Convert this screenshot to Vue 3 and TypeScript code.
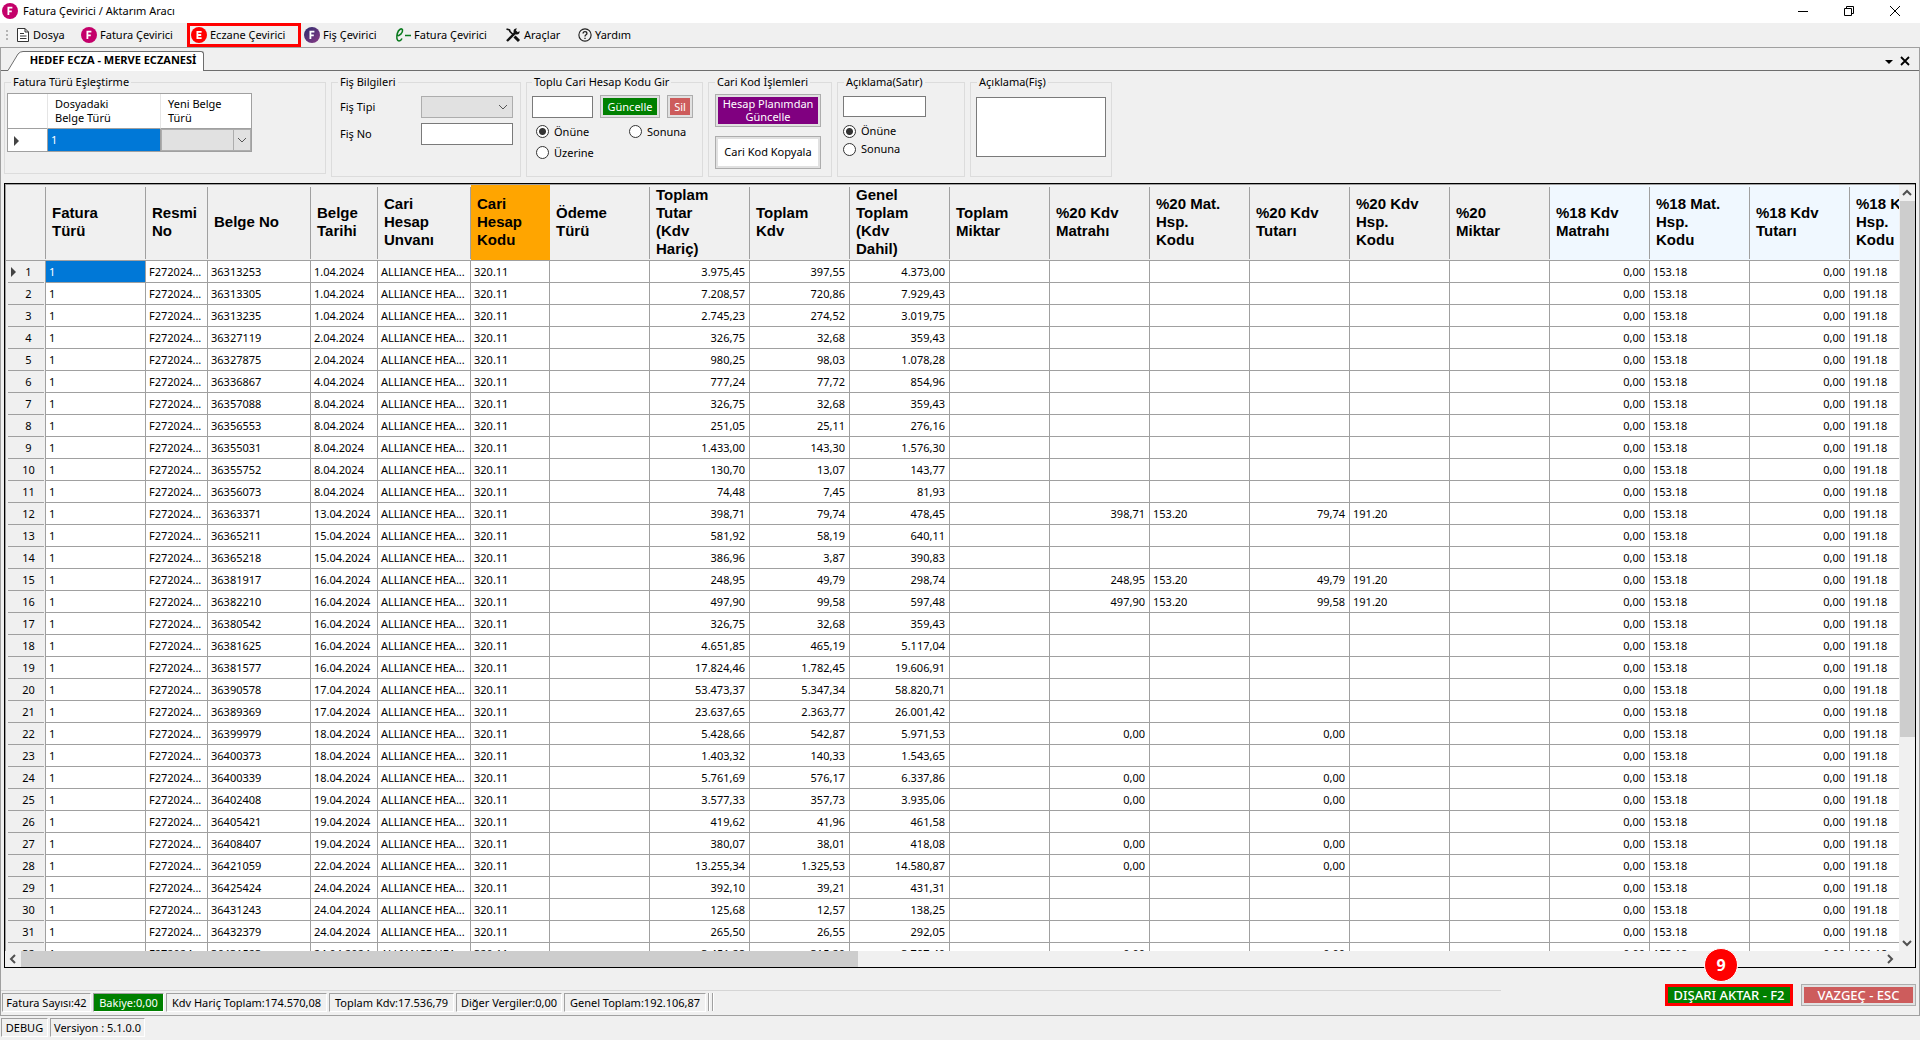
<script setup lang="ts">
import { ref } from 'vue'

interface Column {
  label: string[]
  width: number
  align?: 'right'
  tone?: 'orange' | 'blue'
}

interface Row {
  no: number
  cells: string[]
}

const columns: Column[] = [
  { label: ['Fatura', 'Türü'], width: 100 },
  { label: ['Resmi', 'No'], width: 62 },
  { label: ['Belge No'], width: 103 },
  { label: ['Belge', 'Tarihi'], width: 67 },
  { label: ['Cari', 'Hesap', 'Unvanı'], width: 93 },
  { label: ['Cari', 'Hesap', 'Kodu'], width: 79, tone: 'orange' },
  { label: ['Ödeme', 'Türü'], width: 100 },
  { label: ['Toplam', 'Tutar', '(Kdv', 'Hariç)'], width: 100, align: 'right' },
  { label: ['Toplam', 'Kdv'], width: 100, align: 'right' },
  { label: ['Genel', 'Toplam', '(Kdv', 'Dahil)'], width: 100, align: 'right' },
  { label: ['Toplam', 'Miktar'], width: 100, align: 'right' },
  { label: ['%20 Kdv', 'Matrahı'], width: 100, align: 'right' },
  { label: ['%20 Mat.', 'Hsp.', 'Kodu'], width: 100 },
  { label: ['%20 Kdv', 'Tutarı'], width: 100, align: 'right' },
  { label: ['%20 Kdv', 'Hsp.', 'Kodu'], width: 100 },
  { label: ['%20', 'Miktar'], width: 100, align: 'right' },
  { label: ['%18 Kdv', 'Matrahı'], width: 100, align: 'right', tone: 'blue' },
  { label: ['%18 Mat.', 'Hsp.', 'Kodu'], width: 100, tone: 'blue' },
  { label: ['%18 Kdv', 'Tutarı'], width: 100, align: 'right', tone: 'blue' },
  { label: ['%18 Kdv', 'Hsp.', 'Kodu'], width: 100, tone: 'blue' },
]

// belge no | tarih | kdv hariç | kdv | kdv dahil | %20 matrah | %20 kdv
const source = `36313253|1.04.2024|3.975,45|397,55|4.373,00
36313305|1.04.2024|7.208,57|720,86|7.929,43
36313235|1.04.2024|2.745,23|274,52|3.019,75
36327119|2.04.2024|326,75|32,68|359,43
36327875|2.04.2024|980,25|98,03|1.078,28
36336867|4.04.2024|777,24|77,72|854,96
36357088|8.04.2024|326,75|32,68|359,43
36356553|8.04.2024|251,05|25,11|276,16
36355031|8.04.2024|1.433,00|143,30|1.576,30
36355752|8.04.2024|130,70|13,07|143,77
36356073|8.04.2024|74,48|7,45|81,93
36363371|13.04.2024|398,71|79,74|478,45|398,71|79,74
36365211|15.04.2024|581,92|58,19|640,11
36365218|15.04.2024|386,96|3,87|390,83
36381917|16.04.2024|248,95|49,79|298,74|248,95|49,79
36382210|16.04.2024|497,90|99,58|597,48|497,90|99,58
36380542|16.04.2024|326,75|32,68|359,43
36381625|16.04.2024|4.651,85|465,19|5.117,04
36381577|16.04.2024|17.824,46|1.782,45|19.606,91
36390578|17.04.2024|53.473,37|5.347,34|58.820,71
36389369|17.04.2024|23.637,65|2.363,77|26.001,42
36399979|18.04.2024|5.428,66|542,87|5.971,53|0,00|0,00
36400373|18.04.2024|1.403,32|140,33|1.543,65
36400339|18.04.2024|5.761,69|576,17|6.337,86|0,00|0,00
36402408|19.04.2024|3.577,33|357,73|3.935,06|0,00|0,00
36405421|19.04.2024|419,62|41,96|461,58
36408407|19.04.2024|380,07|38,01|418,08|0,00|0,00
36421059|22.04.2024|13.255,34|1.325,53|14.580,87|0,00|0,00
36425424|24.04.2024|392,10|39,21|431,31
36431243|24.04.2024|125,68|12,57|138,25
36432379|24.04.2024|265,50|26,55|292,05
36431523|24.04.2024|3.451,28|315,20|3.797,40|0,00|0,00`

const rows: Row[] = source.split('\n').map((line, index) => {
  const [belge, tarih, haric, kdv, dahil, matrah = '', tutar = ''] = line.split('|')
  const billed = matrah !== '' && matrah !== '0,00'
  return {
    no: index + 1,
    cells: [
      '1', 'F272024...', belge, tarih, 'ALLIANCE HEA...', '320.11', '',
      haric, kdv, dahil, '', matrah, billed ? '153.20' : '', tutar,
      billed ? '191.20' : '', '', '0,00', '153.18', '0,00', '191.18',
    ],
  }
})

const tableWidth = columns.reduce((sum, c) => sum + c.width, 40)

const totals = [
  { text: 'Fatura Sayısı:42', width: 89 },
  { text: 'Bakiye:0,00', width: 71, green: true },
  { text: 'Kdv Hariç Toplam:174.570,08', width: 161 },
  { text: 'Toplam Kdv:17.536,79', width: 125 },
  { text: 'Diğer Vergiler:0,00', width: 106 },
  { text: 'Genel Toplam:192.106,87', width: 142 },
]

const codePosition = ref('onune')
const notePosition = ref('onune')
</script>

<template>
  <div class="window">
    <header class="title-bar">
      <svg class="round" viewBox="0 0 16 16" aria-hidden="true">
        <circle cx="8" cy="8" r="8" fill="#c4006a" />
        <path d="M6.4 12V4.7h4M6.4 8.3h3.4" fill="none" stroke="#fff" stroke-width="1.8" />
      </svg>
      <h1>Fatura Çevirici / Aktarım Aracı</h1>
      <div class="window-buttons">
        <button type="button" aria-label="Küçült">
          <svg viewBox="0 0 12 12"><path d="M1 6.5h10" /></svg>
        </button>
        <button type="button" aria-label="Önceki boyut">
          <svg viewBox="0 0 12 12"><path d="M1.5 3.5h7v7h-7zM3.5 3.5v-2h7v7h-2" /></svg>
        </button>
        <button type="button" aria-label="Kapat">
          <svg viewBox="0 0 12 12"><path d="M1 1l10 10M11 1L1 11" /></svg>
        </button>
      </div>
    </header>

    <nav class="menu">
      <span class="grip"></span>
      <button type="button" class="m-dosya">
        <svg viewBox="0 0 14 16" class="doc-icon">
          <path d="M1.5 1.5h7.5l3.5 3.5v9.500h-11zM9 1.5v3.5h3.5M4 6.5h4M4 9h6.5M4 11.5h6.5" fill="#fff" stroke="#333" />
        </svg>
        Dosya
      </button>
      <button type="button" class="m-fatura">
        <svg viewBox="0 0 16 16" class="round">
          <circle cx="8" cy="8" r="8" fill="#c4006a" />
          <path d="M6.4 12V4.7h4M6.4 8.3h3.4" fill="none" stroke="#fff" stroke-width="1.8" />
        </svg>
        Fatura Çevirici
      </button>
      <button type="button" class="m-eczane">
        <svg viewBox="0 0 16 16" class="round">
          <circle cx="8" cy="8" r="8" fill="#f00" />
          <path d="M10.600 11.2H6.4V4.8h4.2M6.4 8h3.8" fill="none" stroke="#fff" stroke-width="1.8" />
        </svg>
        Eczane Çevirici
      </button>
      <button type="button" class="m-fis">
        <svg viewBox="0 0 16 16" class="round">
          <defs>
            <linearGradient id="fis" x1="0" y1="0" x2="1" y2="1">
              <stop offset="0" stop-color="#2b2d6e" />
              <stop offset="1" stop-color="#8c3a86" />
            </linearGradient>
          </defs>
          <circle cx="8" cy="8" r="8" fill="url(#fis)" />
          <path d="M6.4 12V4.7h4M6.4 8.3h3.4" fill="none" stroke="#fff" stroke-width="1.8" />
        </svg>
        Fiş Çevirici
      </button>
      <button type="button" class="m-efatura">
        <svg viewBox="0 0 16 16" class="round">
          <path d="M1.5 9C4.5 9 8 6 7.5 3 7 .8 3.5 2 2.3 6.5 1.2 11 2 14 4 14c1.4 0 2.3-1 3-2.5M10 8.5h6" fill="none" stroke="#0a7a1e" stroke-width="1.6" />
        </svg>
        Fatura Çevirici
      </button>
      <button type="button" class="m-araclar">
        <svg viewBox="0 0 16 16" class="round">
          <path d="M2 14L11 5" fill="none" stroke="#111" stroke-width="2.4" />
          <path d="M14.5 4a3 3 0 1 1-2.5-2.5L10.8 3.2l2 2z" fill="#111" />
          <path d="M1.5 2l3 1 .5 1.5L9 8.5" fill="none" stroke="#111" stroke-width="1.6" />
          <path d="M9.5 9.5l4.5 4.5" stroke="#111" stroke-width="3" />
        </svg>
        Araçlar
      </button>
      <button type="button" class="m-yardim">
        <svg viewBox="0 0 16 16" class="help-icon">
          <circle cx="8" cy="8" r="7" fill="none" stroke="#222" stroke-width="1.3" />
          <path d="M5.8 6.3C5.8 3.4 10.2 3.5 10.2 6.2 10.2 7.8 8 7.7 8 9.6M8 11v1.6" fill="none" stroke="#222" stroke-width="1.5" />
        </svg>
        Yardım
      </button>
    </nav>

    <main class="document">
      <div class="tab-strip">
        <div class="tab-edge">
          <svg viewBox="0 0 16 20"><path d="M0 20L1 19.5 11 3Q13 .5 16 .5V20z" fill="#fff" /><path d="M0 19.5h1L11 3Q13 .5 16 .5" fill="none" stroke="#6d6d6d" /></svg>
        </div>
        <button type="button" class="tab">HEDEF ECZA - MERVE ECZANESİ</button>
        <div class="tab-actions">
          <button type="button" aria-label="Sekmeler">
            <svg viewBox="0 0 10 10"><path d="M1 4h8L5 8z" fill="#000" /></svg>
          </button>
          <button type="button" aria-label="Sekmeyi kapat">
            <svg viewBox="0 0 10 10"><path d="M1 1l8 8M9 1L1 9" stroke="#000" stroke-width="1.8" /></svg>
          </button>
        </div>
      </div>

      <section class="groups">
        <fieldset class="g-match">
          <legend>Fatura Türü Eşleştirme</legend>
          <table class="match">
            <thead>
              <tr>
                <th class="handle"></th>
                <th class="from">Dosyadaki<br>Belge Türü</th>
                <th>Yeni Belge<br>Türü</th>
              </tr>
            </thead>
            <tbody>
              <tr>
                <td class="handle"><i class="pointer"></i></td>
                <td class="picked">1</td>
                <td class="choice">
                  <span class="combo split">
                    <select aria-label="Yeni Belge Türü"><option></option></select>
                    <svg viewBox="0 0 10 6"><path d="M1 1l4 4 4-4" /></svg>
                  </span>
                </td>
              </tr>
            </tbody>
          </table>
        </fieldset>

        <fieldset class="g-slip">
          <legend>Fiş Bilgileri</legend>
          <div class="fields">
            <div class="field">
              <label for="fis-tipi">Fiş Tipi</label>
              <span class="combo">
                <select id="fis-tipi"><option></option></select>
                <svg viewBox="0 0 10 6"><path d="M1 1l4 4 4-4" /></svg>
              </span>
            </div>
            <div class="field">
              <label for="fis-no">Fiş No</label>
              <input id="fis-no" type="text">
            </div>
          </div>
        </fieldset>

        <fieldset class="g-code">
          <legend>Toplu Cari Hesap Kodu Gir</legend>
          <div class="line">
            <input type="text" aria-label="Cari hesap kodu">
            <button type="button" class="btn green">Güncelle</button>
            <button type="button" class="btn red">Sil</button>
          </div>
          <div class="radios">
            <label><input v-model="codePosition" type="radio" name="kod" value="onune">Önüne</label>
            <label><input v-model="codePosition" type="radio" name="kod" value="sonuna">Sonuna</label>
            <label><input v-model="codePosition" type="radio" name="kod" value="uzerine">Üzerine</label>
          </div>
        </fieldset>

        <fieldset class="g-ops">
          <legend>Cari Kod İşlemleri</legend>
          <button type="button" class="btn purple">Hesap Planımdan<br>Güncelle</button>
          <button type="button" class="btn white">Cari Kod Kopyala</button>
        </fieldset>

        <fieldset class="g-note">
          <legend>Açıklama(Satır)</legend>
          <input type="text" aria-label="Açıklama satır">
          <div class="stack">
            <label><input v-model="notePosition" type="radio" name="aciklama" value="onune">Önüne</label>
            <label><input v-model="notePosition" type="radio" name="aciklama" value="sonuna">Sonuna</label>
          </div>
        </fieldset>

        <fieldset class="g-memo">
          <legend>Açıklama(Fiş)</legend>
          <textarea aria-label="Açıklama fiş"></textarea>
        </fieldset>
      </section>

      <section class="grid">
        <div class="grid-body">
          <div class="viewport">
            <table class="invoices" :style="{ width: tableWidth + 'px' }">
              <colgroup>
                <col class="handle-col">
                <col v-for="(c, i) in columns" :key="i" :style="{ width: c.width + 'px' }">
              </colgroup>
              <thead>
                <tr>
                  <th></th>
                  <th v-for="(c, i) in columns" :key="i" :class="c.tone">
                    <template v-for="(part, p) in c.label" :key="p"><br v-if="p > 0">{{ part }}</template>
                  </th>
                </tr>
              </thead>
              <tbody>
                <tr v-for="row in rows" :key="row.no">
                  <th scope="row"><i v-if="row.no === 1" class="pointer"></i>{{ row.no }}</th>
                  <td
                    v-for="(cell, i) in row.cells"
                    :key="i"
                    :class="{ right: columns[i].align === 'right', picked: row.no === 1 && i === 0 }"
                  >{{ cell }}</td>
                </tr>
              </tbody>
            </table>
          </div>
          <div class="scroll-v">
            <svg viewBox="0 0 10 10"><path d="M1 7l4-4 4 4" /></svg>
            <div class="track"><div class="thumb"></div></div>
            <svg viewBox="0 0 10 10"><path d="M1 3l4 4 4-4" /></svg>
          </div>
        </div>
        <div class="scroll-h">
          <svg viewBox="0 0 10 10"><path d="M7 1L3 5l4 4" /></svg>
          <div class="track"><div class="thumb"></div></div>
          <svg viewBox="0 0 10 10"><path d="M3 1l4 4-4 4" /></svg>
        </div>
      </section>

      <footer class="actions">
        <div class="totals">
          <span
            v-for="t in totals"
            :key="t.text"
            class="panel"
            :class="{ filled: t.green }"
            :style="{ width: t.width + 'px' }"
          >{{ t.text }}</span>
          <span class="divider"></span>
          <span class="divider"></span>
        </div>
        <div class="commands">
          <button type="button" class="btn export">DIŞARI AKTAR - F2<span class="step">9</span></button>
          <button type="button" class="btn red cancel">VAZGEÇ - ESC</button>
        </div>
      </footer>
    </main>

    <footer class="status">
      <span class="panel debug">DEBUG</span>
      <span class="panel version">Versiyon : 5.1.0.0</span>
    </footer>
  </div>
</template>

<style>
body {
  margin: 0;
  background: #f0f0f0;
}
</style>

<style scoped>
* {
  box-sizing: border-box;
}

.window {
  display: flex;
  flex-direction: column;
  height: 100vh;
  overflow: hidden;
  background: #f0f0f0;
  color: #000;
  font: 11px/14px "Noto Sans", sans-serif;
}

button,
input,
select,
textarea {
  margin: 0;
  border-radius: 0;
  color: inherit;
  font: inherit;
}

button {
  padding: 0;
  border: 0;
  background: none;
}

.round {
  flex: none;
  width: 16px;
  height: 16px;
}

/* title bar */
.title-bar {
  display: flex;
  flex: none;
  align-items: center;
  gap: 5px;
  height: 23px;
  padding: 0 2px 1px;
  background: #fff;
}

.title-bar h1 {
  margin: 0;
  font-size: 11px;
  font-weight: 400;
}

.window-buttons {
  display: flex;
  margin-left: auto;
}

.window-buttons button {
  display: flex;
  align-items: center;
  justify-content: center;
  width: 46px;
  height: 20px;
}

.window-buttons svg {
  width: 12px;
  height: 12px;
  fill: none;
  stroke: #000;
}

/* menu */
.menu {
  display: flex;
  flex: none;
  align-items: stretch;
  height: 24px;
}

.menu button {
  display: flex;
  align-items: center;
  gap: 3px;
  white-space: nowrap;
}

.grip {
  width: 2px;
  margin: 7px 8px 5px 6px;
  background: repeating-linear-gradient(#b4b4b4 0 2px, transparent 2px 4px);
}

.doc-icon {
  width: 14px;
  height: 16px;
}

.help-icon {
  width: 14px;
  height: 14px;
}

.m-dosya {
  width: 65px;
}

.m-fatura {
  width: 106px;
}

.menu .m-eczane {
  width: 114px;
  padding-left: 1px;
  border: 3px solid #f00;
}

.m-fis {
  width: 92px;
  padding-left: 3px;
}

.m-efatura {
  width: 112px;
  padding-left: 2px;
}

.m-araclar {
  width: 73px;
}

/* document frame */
.document {
  display: flex;
  flex: 1;
  flex-direction: column;
  min-height: 0;
  border: 1px solid #a0a0a0;
}

.tab-strip {
  display: flex;
  flex: none;
  align-items: flex-end;
  height: 23px;
  background: linear-gradient(#6d6d6d, #6d6d6d) bottom / 100% 1px no-repeat;
}

.tab-edge {
  width: 16px;
  height: 20px;
  margin-left: 6px;
}

.tab-edge svg {
  display: block;
  width: 16px;
  height: 20px;
}

.tab {
  display: flex;
  align-items: center;
  justify-content: center;
  width: 181px;
  height: 20px;
  padding-bottom: 3px;
  border: solid #6d6d6d;
  border-width: 1px 1px 0 0;
  border-radius: 0 3px 0 0;
  background: #fff;
  font-weight: 700;
  white-space: nowrap;
}

.tab-actions {
  display: flex;
  gap: 6px;
  margin: 0 9px 5px auto;
}

.tab-actions svg {
  display: block;
  width: 10px;
  height: 10px;
}

/* group boxes */
.groups {
  display: flex;
  flex: none;
  align-items: flex-start;
  gap: 5px;
  height: 112px;
  padding: 4px 0 0 3px;
}

fieldset {
  flex: none;
  height: 102px;
  min-width: 0;
  margin: 0;
  padding: 0 5px;
  border: 1px solid #dcdcdc;
}

legend {
  height: 14px;
  margin-left: 1px;
  padding: 0 2px;
  white-space: nowrap;
}

.g-match {
  width: 322px;
  height: 99px;
  padding: 0 2px;
}

.g-match legend {
  margin-left: 4px;
}

.match {
  width: 245px;
  margin-top: 4px;
  border: 1px solid #a0a0a0;
  border-spacing: 0;
  background: #fff;
  table-layout: fixed;
}

.match th {
  height: 35px;
  padding: 0 0 0 7px;
  border-right: 1px solid #e5e5e5;
  border-bottom: 1px solid #a0a0a0;
  font-weight: 400;
  text-align: left;
}

.match th:last-child {
  border-right: 0;
}

.match td {
  height: 22px;
  padding: 0 3px;
  border-right: 1px solid #a0a0a0;
}

.match td:last-child {
  padding: 0;
  border-right: 0;
}

.match .handle {
  width: 40px;
}

.match td.handle {
  padding-left: 6px;
}

.match .from {
  width: 113px;
}

.pointer {
  display: inline-block;
  border: solid transparent;
  border-width: 5px 0 5px 5px;
  border-left-color: #444;
  vertical-align: middle;
}

.picked {
  background: #0078d7;
  color: #fff;
}

.combo {
  display: grid;
  width: 92px;
  height: 22px;
  border: 1px solid #adadad;
  background: #e1e1e1;
}

.combo select {
  grid-area: 1 / 1;
  width: 100%;
  border: 0;
  background: none;
  appearance: none;
}

.combo svg {
  grid-area: 1 / 1;
  place-self: center end;
  width: 10px;
  height: 6px;
  margin-right: 4px;
  fill: none;
  stroke: #555;
  pointer-events: none;
}

.combo.split {
  width: 100%;
  background: linear-gradient(#adadad, #adadad) right 16px top / 1px 100% no-repeat #e1e1e1;
}

.combo.split svg {
  margin-right: 3px;
}

input[type='text'],
textarea {
  padding: 0 2px;
  border: 1px solid #7a7a7a;
  background: #fff;
}

input[type='radio'] {
  width: 13px;
  height: 13px;
  border: 1px solid #333;
  border-radius: 50%;
  background: #fff;
  appearance: none;
}

input[type='radio']:checked {
  background: radial-gradient(circle, #333 3px, #fff 4px);
}

label {
  display: flex;
  align-items: center;
  gap: 5px;
}

.g-slip {
  width: 190px;
}

.fields {
  display: flex;
  flex-direction: column;
  gap: 5px;
  margin: 7px 2px 0 3px;
}

.field {
  display: flex;
  align-items: center;
  justify-content: space-between;
}

.field input {
  width: 92px;
  height: 22px;
}

.g-code {
  width: 177px;
}

.g-code legend {
  margin-left: 0;
}

.line {
  display: flex;
  align-items: center;
  gap: 7px;
  margin-top: 6px;
}

.line input {
  width: 61px;
  height: 22px;
}

.line .green {
  width: 60px;
  height: 23px;
}

.line .red {
  width: 26px;
  height: 23px;
}

.radios {
  display: grid;
  grid-template-columns: 93px auto;
  grid-auto-rows: 21px;
  margin: 3px 0 0 4px;
}

.g-ops {
  width: 124px;
}

.g-ops .btn {
  display: block;
  width: 106px;
  height: 33px;
  margin: 5px 0 9px 1px;
  padding-bottom: 2px;
  line-height: 13px;
}

.g-note {
  width: 128px;
}

.g-note > input {
  display: block;
  width: 83px;
  height: 21px;
  margin-top: 7px;
}

.stack {
  margin-top: 5px;
}

.stack label {
  height: 18px;
}

.g-memo {
  width: 142px;
}

.g-memo textarea {
  display: block;
  width: 100%;
  height: 60px;
  margin-top: 8px;
  resize: none;
}

.btn {
  border: 1px solid #adadad;
  box-shadow: inset 0 0 0 2px #e1e1e1;
  color: #fff;
  white-space: nowrap;
}

.green {
  background: #008000;
}

.red {
  background: #cd5c5c;
}

.purple {
  background: #800080;
}

.white {
  background: #fff;
  color: #000;
}

/* invoice grid */
.grid {
  display: flex;
  flex: 1;
  flex-direction: column;
  min-height: 0;
  margin: 0 3px;
  border: 1px solid #000;
}

.grid-body {
  display: flex;
  flex: 1;
  min-height: 0;
  border: solid #a0a0a0;
  border-width: 1px 0 0 1px;
}

.viewport {
  flex: 1;
  min-width: 0;
  overflow: hidden;
  background: #fff;
}

.invoices {
  border-spacing: 0;
  table-layout: fixed;
}

.handle-col {
  width: 40px;
}

.invoices td,
.invoices th {
  overflow: hidden;
  white-space: nowrap;
}

.invoices thead th {
  height: 76px;
  padding: 0 6px 1px;
  border-bottom: 1px solid #a0a0a0;
  background: linear-gradient(#a0a0a0, #a0a0a0) right 0 top 2px / 1px 72px no-repeat #f0f0f0;
  font: 700 15px/18px "Liberation Sans", Arial, sans-serif;
  text-align: left;
}

.invoices thead .blue {
  background-color: #f0f8ff;
}

.invoices thead .orange {
  background: #ffa500;
}

.invoices tbody th {
  padding: 0 0 0 6px;
  border-right: 1px solid #a0a0a0;
  background: linear-gradient(#a0a0a0, #a0a0a0) 2px bottom / 36px 1px no-repeat #f0f0f0;
  font-weight: 400;
  text-align: center;
}

.invoices tbody th .pointer {
  margin: -2px 9px 0 -14px;
}

.invoices td {
  height: 22px;
  padding: 0 4px 0 3px;
  border: solid #a0a0a0;
  border-width: 0 1px 1px 0;
}

.invoices .right {
  text-align: right;
}

.scroll-v {
  display: flex;
  flex: none;
  flex-direction: column;
  align-items: center;
  width: 16px;
}

.scroll-v svg,
.scroll-h svg {
  flex: none;
  width: 10px;
  height: 10px;
  margin: 3px;
  fill: none;
  stroke: #505050;
  stroke-width: 2;
}

.track {
  flex: 1;
}

.thumb {
  background: #cdcdcd;
}

.scroll-v .track {
  width: 15px;
}

.scroll-v .thumb {
  height: 73%;
}

.scroll-h {
  display: flex;
  flex: none;
  align-items: center;
  height: 16px;
  padding-right: 17px;
}

.scroll-h .thumb {
  width: 45%;
  height: 16px;
}

/* totals and commands */
.actions {
  display: flex;
  flex: none;
  justify-content: space-between;
  height: 47px;
  padding-right: 3px;
}

.totals {
  display: flex;
  flex: 0 1 1500px;
  gap: 2px;
  height: 24px;
  margin-top: 22px;
  padding: 2px 0 2px 1px;
  border-top: 1px solid #d5d5d5;
}

.panel {
  display: flex;
  flex: none;
  align-items: center;
  justify-content: center;
  height: 19px;
  border: 1px solid;
  border-color: #a0a0a0 #fff #fff #a0a0a0;
  white-space: nowrap;
}

.filled {
  background: #008000;
  color: #fff;
}

.divider {
  width: 2px;
  height: 18px;
  border: solid #a0a0a0;
  border-width: 0 0 0 1px;
  background: #fff;
}

.commands {
  display: flex;
  gap: 8px;
  align-items: flex-start;
  padding-top: 16px;
}

.commands .btn {
  height: 22px;
  font-size: 13px;
  font-weight: 500;
}

.export {
  position: relative;
  width: 128px;
}

.commands .export {
  border: 3px solid #f00;
  background: #008000;
  box-shadow: none;
}

.cancel {
  width: 115px;
}

.step {
  position: absolute;
  bottom: 21px;
  left: 50%;
  width: 34px;
  height: 34px;
  margin-left: -25px;
  border: 1px solid #fff;
  border-radius: 50%;
  background: #f00;
  font: 700 16px/32px "Open Sans", sans-serif;
  text-align: center;
}

/* application status bar */
.status {
  display: flex;
  flex: none;
  gap: 2px;
  height: 24px;
  padding: 2px 1px;
}

.debug {
  width: 47px;
}

.version {
  width: 95px;
}
</style>
